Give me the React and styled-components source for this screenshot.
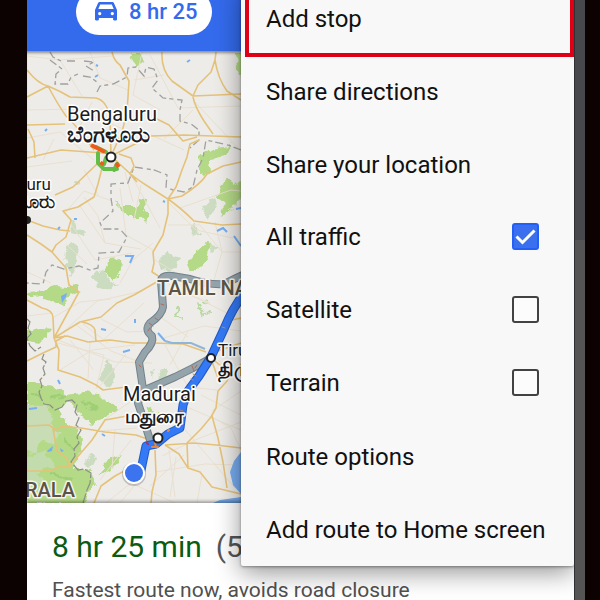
import React, { useState } from "react";
import styled, { createGlobalStyle } from "styled-components";

const GlobalStyle = createGlobalStyle`
  body {
    margin: 0;
    background: #0c0202;
    font-family: Roboto, "Noto Sans", sans-serif;
  }
  * {
    box-sizing: border-box;
  }
`;

const Frame = styled.div`
  display: flex;
  height: 100vh;
  padding: 0 15px 0 27px;
  background: #0c0202;
  overflow: hidden;
`;

const Screen = styled.main`
  position: relative;
  flex: 1;
  min-width: 0;
  display: flex;
  flex-direction: column;
  background: white;
  overflow: hidden;
`;

const Edge = styled.div`
  width: 11px;
  background: linear-gradient(#46484d 240px, #555555 240px);
  border-left: 1px solid #303134;
`;

const Header = styled.header`
  display: flex;
  align-items: flex-end;
  flex-shrink: 0;
  height: 51px;
  padding: 0 0 16px 49px;
  background: #346bed;
  overflow: hidden;
`;

const ModeButton = styled.button`
  display: flex;
  align-items: center;
  flex-shrink: 0;
  gap: 12px;
  height: 46px;
  padding: 0 15px 2px 19px;
  border: none;
  border-radius: 23px;
  background: white;
  color: #346bed;
  font-family: inherit;
  font-size: 22px;
  font-weight: 500;
  cursor: pointer;
`;

const MapArea = styled.section`
  position: relative;
  flex-shrink: 0;
  height: 452px;
  background: #eeece7;
  svg {
    display: block;
    width: 100%;
    height: 100%;
  }
  &::after {
    content: "";
    position: absolute;
    inset: 0;
    pointer-events: none;
    box-shadow: inset 0 4px 3px -2px #00000066, inset 0 -4px 3px -2px #00000050;
  }
`;

const Summary = styled.section`
  padding: 24px 25px 0;
  white-space: nowrap;
`;

const Duration = styled.h1`
  display: flex;
  gap: 14px;
  margin: 0;
  color: #0b5c12;
  font-size: 30px;
  font-weight: 400;
  line-height: 40px;
`;

const Distance = styled.span`
  color: #555555;
`;

const Note = styled.p`
  margin: 9px 0 0;
  color: #505050;
  font-size: 21px;
  line-height: 28px;
`;

const Menu = styled.div`
  position: absolute;
  top: -18px;
  left: 214px;
  right: 0;
  z-index: 2;
  display: flex;
  flex-direction: column;
  border-radius: 0 0 2px 2px;
  background: #f8f8f8;
  box-shadow: 0 6px 26px #00000070, 0 1px 3px #00000060;
`;

const MenuButton = styled.button`
  position: relative;
  height: 73px;
  padding: 0 25px;
  border: none;
  background: none;
  color: #111111;
  font-family: inherit;
  font-size: 24px;
  text-align: left;
  white-space: nowrap;
  cursor: pointer;
`;

const Highlight = styled.span`
  position: absolute;
  inset: 0 0 -2px 4px;
  border: 4px solid #de0016;
`;

const MenuLabel = styled.label`
  display: flex;
  align-items: center;
  justify-content: space-between;
  height: 73px;
  padding: 0 35px 2px 25px;
  color: #111111;
  font-size: 24px;
  cursor: pointer;
`;

const CheckBox = styled.span`
  display: grid;
  place-items: center;
  input,
  svg {
    grid-area: 1 / 1;
  }
  svg {
    pointer-events: none;
  }
`;

const CheckInput = styled.input`
  appearance: none;
  width: 27px;
  height: 27px;
  margin: 0;
  border: 2px solid #424242;
  border-radius: 3px;
  background: #fcfcfc;
  &:checked {
    border-color: #2260f5;
    background: #3a70f0;
  }
`;

const CarIcon = () => (
  <svg width="22" height="20" viewBox="0 0 22 20" fill="#346bed" aria-hidden="true">
    <path
      fillRule="evenodd"
      d="M4.600 1h12.800c.7 0 1.200.4 1.500 1L22 9v9.200c0 .8-.4 1.200-1.100 1.200h-1.700c-.7 0-1.100-.4-1.100-1.200V17h-14.200v1.200c0 .8-.4 1.200-1.100 1.200H1.100C.4 19.400 0 19 0 18.200V9l3.100-7c.3-.6.8-1 1.500-1zM5.200 3.500L3.300 8h15.400l-1.900-4.500zM4.700 11a1.600 1.600 0 1 0 .01 0zM17.300 11a1.600 1.600 0 1 0 .01 0z"
    />
  </svg>
);

const parks = [
  "130,54 141,54 144,62 137,65 133,60",
  "236,54 243,54 243,78 237,68",
  "114,199 120,206 138,206 139,199 145,200 144,210 149,216 146,223 140,216 130,216 120,209",
  "198,158 206,151 224,148 233,143 224,156 209,160 210,173 202,174",
  "220,184 228,180 234,184 243,179 243,197 232,208 220,217 224,202 216,196",
  "188,266 194,254 209,240 208,257 200,268 190,272",
  "109,260 121,259 122,270 113,280 105,272",
  "47,290 64,288 79,286 75,292 52,294",
  "27,292 42,291 56,286 68,287 76,285 80,292 67,298 62,308 54,302 40,298 32,297",
  "27,331 38,327 50,329 47,336 40,343 27,341",
  "27,381 52,385 66,394 84,392 98,394 106,402 118,408 104,418 92,425 78,412 68,402 58,408 64,422 78,430 82,440 80,455 72,470 88,470 96,482 88,491 86,503 27,503",
  "98,476 104,464 113,457 124,453 114,466 106,470",
  "144,408 152,407 159,416 156,426 149,418",
];

const hills = [
  "66,250 72,242 78,246 77,262 70,275 65,265",
  "158,258 166,254 180,258 176,268 162,270",
  "206,205 214,196 216,208 207,220 203,213",
  "70,220 80,228 87,232 84,237 71,233",
  "93,276 104,268 108,280 118,285 110,289 98,286",
  "103,367 110,359 114,374 108,388 101,380",
  "158,372 164,370 168,377 160,380",
  "190,228 196,225 200,235 194,238",
  "75,180 80,180 78,184 74,183",
  "207,243 220,246 212,252",
  "82,462 94,454 96,460 88,468",
  "150,372 155,370 154,378",
];

const minorRoads = [
  "M27 56 60 60 82 96 M90 52 100 78 128 90 M60 60 112 56 M142 52 133 95 160 110 M164 75 134 80",
  "M27 110 75 109 121 128 M80 126 92 102 M150 55 178 108 241 106 M193 110 164 139 M193 100 240 150",
  "M27 138 60 132 94 160 M43 160 54 139 M27 167 72 161 M65 213 84 191 112 201 M84 170 98 195 M145 132 184 150",
  "M125 172 133 202 M130 173 160 228 M120 188 126 235 153 250 M141 185 134 220 M153 243 133 260 120 283",
  "M71 224 95 260 132 253 M80 206 105 243 141 249 M84 197 98 216 105 243 M66 244 87 264 M168 202 196 230 233 238",
  "M180 208 231 190 241 191 M155 260 181 276 M168 225 200 225 222 252 241 252 M215 222 222 252 214 280",
  "M27 316 52 313 M58 340 115 362 152 363 M61 334 97 301 143 291 M75 324 111 351 137 361 M83 324 108 343",
  "M54 342 104 355 96 389 M70 340 93 369 M54 317 80 302 111 299 M27 272 51 283 M101 319 127 332 153 331",
  "M60 370 92 350 135 345 M100 386 126 354 M90 342 88 379 M100 343 144 303 M165 345 188 387 217 390 M164 338 204 326 241 331",
  "M162 318 188 337 M167 283 241 320 M177 290 210 303 M170 365 188 331 M218 360 241 382 M231 345 241 351",
  "M100 431 137 428 M104 420 130 402 M131 440 100 480 M115 429 112 468 M162 456 195 440 241 422 M169 450 175 497",
  "M155 472 205 464 241 465 M176 457 170 497 M201 395 241 415 M189 408 241 430 M181 425 235 488 M106 503 131 483 175 503",
  "M212 411 241 391 M202 474 197 503 M144 474 120 503 M212 417 231 428 241 450 M184 455 150 486",
];

const majorRoads = [
  "M27 70 Q38 84 48 86 Q60 91 70 97 L96 98 Q108 101 110 120 L111 156",
  "M27 97 48 86 Q58 105 66 116 Q77 126 94 150",
  "M112 52 Q114 61 120 65 L129 81 127 112 122 132 111 156",
  "M162 52 Q161 70 172 81 L193 96 241 94 M193 96 198 85 211 72 215 60 216 52",
  "M215 60 Q218 79 227 91 L241 100 M193 97 Q195 107 204 121 L213 134",
  "M27 125 65 124 M27 158 61 150 103 153 M35 158 34 142 28 129 M111 156 151 136 184 135 241 137",
  "M157 119 169 125 183 141 197 137",
  "M111 156 124 168 Q133 177 149 187 L168 199 Q181 208 194 221 L222 225 241 224",
  "M168 199 182 196 Q201 184 207 174 L223 166 241 162",
  "M168 199 176 187 182 170 187 157 190 144 199 140 M119 154 131 158 134 166 130 174 137 182",
  "M168 199 168 214 163 235 153 252 154 263 152 272 163 279",
  "M103 164 98 184 94 197 78 207 63 211 71 220 66 237 56 245 52 252 66 268 69 285 79 292 54 338",
  "M27 220 43 226 60 230 70 231 M27 235 41 244 52 252 M55 195 73 187 97 164",
  "M27 300 42 308 Q53 310 53 318 L54 338 80 322 101 317 117 303 134 295 160 280",
  "M54 338 67 336 88 342 110 340 133 343 153 343 183 344 206 352 M82 322 Q93 324 95 330 L96 342",
  "M54 338 59 350 58 370 80 377 96 385 103 390 126 387 M27 361 43 353 56 347 56 341 65 336",
  "M27 426 49 425 56 430 62 426 81 428 105 432 136 435 155 442 M27 471 50 471 59 467 69 467 M69 467 80 454 92 440 105 420 127 416",
  "M53 429 57 451 67 458 69 467",
  "M165 445 194 443 216 445 241 448 M165 445 179 454 188 468 200 472 212 487 241 494",
  "M228 380 218 391 216 408 211 417 201 429 187 443 188 468 M212 416 218 438 223 462 227 488",
  "M155 450 156 475 152 492 151 503 M137 464 115 476 101 486 94 503 M227 380 241 364",
  "M232 320 241 318 M215 361 228 372 M215 352 241 343 M211 359 218 378",
];

const borders = [
  "M50 52 53 57 61 61 M50 60 62 69 56 74 55 84 68 84 71 77 78 74 M67 61 77 61 M84 61 94 62 86 66 94 71 M83 76 90 77 97 82 M97 92 100 86 113 84 127 77 128 68 136 67 144 76 146 67 154 69 158 80 152 88 163 98 182 100 180 110 180 121 191 124 199 130 199 140 190 148",
  "M241 150 228 145 206 140 203 158 197 170 193 187 184 192 173 190 166 187 167 175 154 170 141 168 134 167 128 183 111 184 111 198 113 211 100 223 103 229 120 229 127 237 119 252 99 253 98 268 90 270 79 266 64 269 52 265 46 272 43 284 27 283",
];

const ridges = [
  "M27 319 30 322 28 328 31 334 27 338 30 346 35 351 41 347 M44 354 42 359 46 362 43 368 45 374 40 380 42 386 39 392 41 398 44 404 50 405 55 410 62 407 66 401 72 400 77 405 75 412 79 418 76 425 81 430 77 437 79 443 74 449 75 456 71 462 78 470 84 469 91 473 90 483 87 490 83 503",
];

const altRoute =
  "M245 274 Q234 279 224 284 Q208 285 190 279 L172 276 Q162 275 161 281 L163 307 Q162 315 150 323 Q144 330 152 336 Q154 343 145 352 L139 362 143 389 138 403 143 418 150 440 M211 358 193 368 175 377 145 390";

const mainRoute =
  "M245 292 Q232 309 224 329 L211 357 199 376 188 391 183 405 180 428 168 434 156 444 146 446 141 470";

const RouteMap = () => (
  <svg viewBox="27 51 547 452" preserveAspectRatio="xMinYMin slice" role="img" aria-label="Route">
    <defs>
      <filter id="rough" x="-20%" y="-20%" width="140%" height="140%">
        <feTurbulence type="fractalNoise" baseFrequency="0.12" numOctaves="3" seed="4" />
        <feDisplacementMap in="SourceGraphic" scale="9" xChannelSelector="R" yChannelSelector="G" />
      </filter>
    </defs>
    <rect x="27" y="51" width="547" height="452" fill="#eeece9" />
    <g filter="url(#rough)">
      {hills.map((points) => (
        <polygon key={points} points={points} fill="#cbdcc0" />
      ))}
      {parks.map((points) => (
        <polygon key={points} points={points} fill="#b5da87" />
      ))}
      <path d="M20 406 45 404 52 412 50 423 60 434 54 446 42 440 36 452 20 450z" fill="#c8ddb5" />
      <path d="M20 460 45 450 54 466 35 472 48 482 20 490z" fill="#c3dcad" />
      <path d="M50 398 66 396 M82 402 98 410 M64 440 74 450 M50 474 72 480 M30 394 42 398" fill="none" stroke="#9ecf77" strokeWidth="3" />
      <path d="M178 306 175 317 182 319 M201 302 208 301 M199 305 203 315 210 312" fill="none" stroke="#b9d8a2" strokeWidth="2" />
    </g>
    <g fill="none">
      <path d={minorRoads.join(" ")} stroke="#e9e0cf" strokeWidth="1" />
      <path d={borders.join(" ")} stroke="#a0a09e" strokeWidth="1.300" strokeDasharray="8 3 4 4" />
      <path d={ridges.join(" ")} stroke="#8b9085" strokeWidth="1.200" strokeDasharray="12 2" />
      <path d={majorRoads.join(" ")} stroke="#e5c27a" strokeWidth="1.600" strokeLinejoin="round" />
      <path
        d="M125 256 133 256 130 263 M217 231 223 228 227 232 M234 236 241 246 M101 329 106 330 M123 352 130 350 M135 319 135 323 M158 333 165 341 M58 380 60 384 M102 434 105 436 M60 227 58 229 M45 131 47 129 M187 62 190 60 M96 65 98 66 M95 77 98 75 M163 201 165 202 M74 219 77 219 M236 209 241 208 M29 409 37 408"
        stroke="#76aef0"
        strokeWidth="2"
      />
      <path d="M165 341 172 343 191 343 205 349" stroke="#8fb6d6" strokeWidth="2" />
    </g>
    <g fill="#78adf0">
      <path d="M241 452 234 461 230 472 233 485 241 494zM213 503 220 500 241 497 241 503z" />
      <path d="M61 296 67 293 66 297 62 303zM47 451 53 446 52 451 48 452zM60 448 64 451 61 452z" />
    </g>

    <g fill="none" strokeLinejoin="round" strokeLinecap="round">
      <path d={altRoute} stroke="#71828b" strokeWidth="8" />
      <path d={altRoute} stroke="#95a3aa" strokeWidth="6" />
      <path d={mainRoute} stroke="#2259c4" strokeWidth="9" />
      <path d={mainRoute} stroke="#3479f5" strokeWidth="7" />
      <path d="M149 323 153 326 M148 331 150 328 M195 368 197 365 M192 366 194 371 M161 304 164 305 M139 365 141 367 M155 318 158 320" stroke="#b06a5c" strokeWidth="1" />
      <path d="M222 327 225 328 M193 374 196 376 M191 379 193 380 M180 410 183 411" stroke="#c08a5a" strokeWidth="1" />
      <path d="M152 447 158 447 M155 443 156 447 M168 431 169 430" stroke="#e8893a" strokeWidth="2" />
      <path d="M147 443 148 444" stroke="#cc2244" strokeWidth="2" />
      <path d="M96 147 106 152 M98 153 98 163 104 169 117 169 M106 158 104 164 M117 164 114 170" stroke="#63bd47" strokeWidth="4" />
      <path d="M91 145 105 152 M101 165 103 162 M116 163 119 167" stroke="#ef5a1c" strokeWidth="4" strokeLinecap="butt" />
    </g>

    <g fill="white" stroke="#222222" strokeWidth="2">
      <circle cx="111" cy="157" r="4.500" />
      <circle cx="211" cy="358" r="4" />
      <circle cx="158" cy="438" r="4.500" />
      <circle cx="27" cy="220" r="3" fill="#222222" />
    </g>
    <circle cx="134" cy="474" r="12" fill="#00000030" />
    <circle cx="134" cy="473" r="11" fill="white" />
    <circle cx="134" cy="473" r="9" fill="#3b74ee" />

    <g fill="#1c1c1c" stroke="white" strokeWidth="3" strokeLinejoin="round" paintOrder="stroke" fontSize="20">
      <g fontWeight="600">
        <text x="67" y="142" fontSize="22">ಬೆಂಗಳೂರು</text>
        <text x="55" y="208" fontSize="19" textAnchor="end">ಸೂರು</text>
        <text x="218" y="376" fontSize="19">திரு</text>
        <text x="125" y="423" fontSize="19">மதுரை</text>
      </g>
      <text x="67" y="121">Bengaluru</text>
      <text x="51" y="190" fontSize="17" textAnchor="end">uru</text>
      <text x="218" y="356" fontSize="17">Tiru</text>
      <text x="123" y="401">Madurai</text>
    </g>
    <g fill="#5b5446" stroke="#f6f4ee" strokeWidth="3" strokeLinejoin="round" paintOrder="stroke" fontSize="20" fontWeight="500">
      <text x="157" y="295">TAMIL NA</text>
      <text x="75" y="497" textAnchor="end">RALA</text>
    </g>
  </svg>
);

const CheckItem = ({ label, defaultChecked = false }) => {
  const [checked, setChecked] = useState(defaultChecked);

  return (
    <MenuLabel>
      {label}
      <CheckBox>
        <CheckInput
          type="checkbox"
          checked={checked}
          onChange={(e) => setChecked(e.target.checked)}
        />
        {checked && (
          <svg width="21" height="17" viewBox="0 0 21 17" fill="none">
            <path d="M1.500 8.500 7.500 14.500 19.500 2.500" stroke="white" strokeWidth="3" />
          </svg>
        )}
      </CheckBox>
    </MenuLabel>
  );
};

const App = () => (
  <>
    <GlobalStyle />
    <Frame>
      <Screen>
        <Header>
          <ModeButton>
            <CarIcon />
            8 hr 25
          </ModeButton>
        </Header>
        <MapArea>
          <RouteMap />
        </MapArea>
        <Summary>
          <Duration>
            8 hr 25 min
            <Distance>(5</Distance>
          </Duration>
          <Note>Fastest route now, avoids road closure</Note>
        </Summary>
        <Menu>
          <MenuButton>
            Add stop
            <Highlight />
          </MenuButton>
          <MenuButton>Share directions</MenuButton>
          <MenuButton>Share your location</MenuButton>
          <CheckItem label="All traffic" defaultChecked />
          <CheckItem label="Satellite" />
          <CheckItem label="Terrain" />
          <MenuButton>Route options</MenuButton>
          <MenuButton>Add route to Home screen</MenuButton>
        </Menu>
      </Screen>
      <Edge />
    </Frame>
  </>
);

export default App;
